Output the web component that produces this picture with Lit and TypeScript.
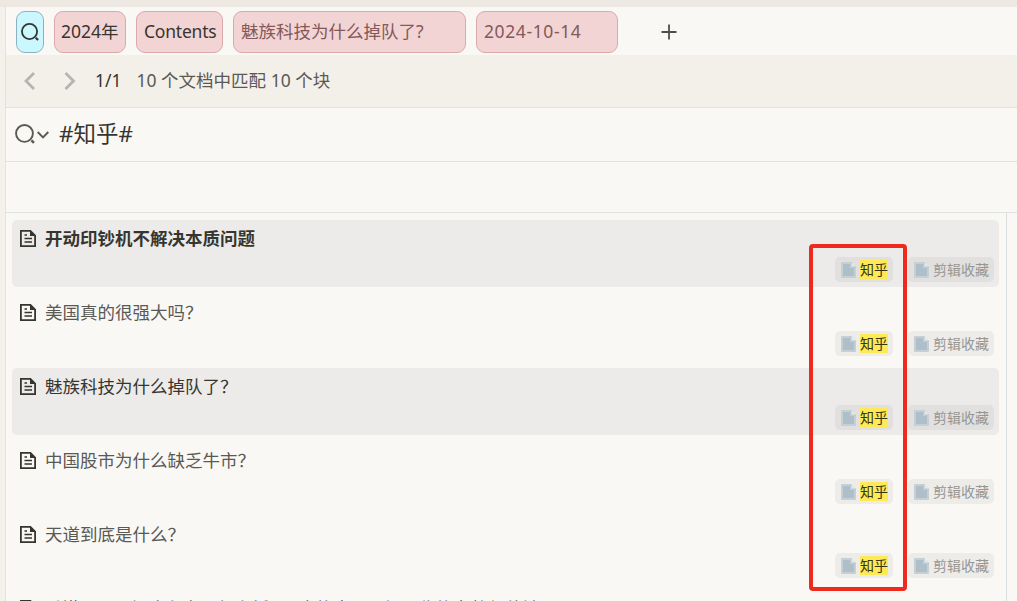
import {LitElement, html, css, svg} from 'lit';
import {customElement, property} from 'lit/decorators.js';
import {classMap} from 'lit/directives/class-map.js';

interface Doc {
  title: string;
  shaded?: boolean;
  bold?: boolean;
}

const docs: Doc[] = [
  {title: '开动印钞机不解决本质问题', shaded: true, bold: true},
  {title: '美国真的很强大吗？'},
  {title: '魅族科技为什么掉队了？', shaded: true},
  {title: '中国股市为什么缺乏牛市？'},
  {title: '天道到底是什么？'},
  {title: '香港 2024 年才六个月怎么折 30 个热点，3 年回收的完整保值法'},
];

const lens = svg`
  <circle cx="9" cy="9" r="8" />
  <path d="M15.6 15.6l2.4 2.4" stroke-width="2.4" />
`;

@customElement('doc-tag')
export class DocTag extends LitElement {
  static styles = css`
    :host {
      display: flex;
      align-items: center;
      box-sizing: border-box;
      height: 25px;
      padding: 0 5px 0 6px;
      border-radius: 5px;
      background: rgba(55, 53, 47, 0.06);
      color: #979693;
      font-size: 14px;
      line-height: 19px;
    }
    svg {
      width: 15px;
      height: 16px;
      margin-right: 4px;
    }
    .marked {
      background: #ffe955;
      color: #37350f;
    }
  `;

  @property() label = '';
  @property({type: Boolean}) marked = false;

  render() {
    return html`
      <svg viewBox="0 0 15 16">
        <path d="M1 0h9l5 5v10q0 1-1 1h-13q-1 0-1-1v-14q0-1 1-1z" fill="#c4d0d5" />
        <path d="M2 2h7v4h4v8h-11z" fill="#afbfca" />
        <path d="M10 0l5 5h-4q-1 0-1-1z" fill="#e4ebed" />
        <path d="M10 0v4q0 1 1 1h4" fill="none" stroke="#b4c4c9" stroke-width="0.8" />
      </svg>
      <span class=${classMap({marked: this.marked})}>${this.label}</span>
    `;
  }
}

@customElement('app-root')
export class AppRoot extends LitElement {
  static styles = css`
    :host {
      display: flex;
      flex-direction: column;
      position: relative;
      box-sizing: border-box;
      width: 1017px;
      height: 601px;
      overflow: hidden;
      padding: 7px 0 0 5px;
      background: linear-gradient(#eee8e2 7px, #f4f0ea 7px);
      color: #37352f;
      font-family: 'Noto Sans', 'Noto Sans CJK SC', sans-serif;
      font-size: 17.5px;
      line-height: 26px;
      white-space: nowrap;
    }
    svg {
      display: block;
      flex: none;
      fill: none;
      stroke: currentColor;
    }
    .panel {
      flex: 1;
      min-height: 0;
      display: flex;
      flex-direction: column;
      border-left: 1px solid #e2e2de;
      background: #f9f8f4;
    }
    .tabs {
      flex: none;
      display: flex;
      gap: 10px;
      height: 48px;
      box-sizing: border-box;
      padding: 4px 0 2px 10px;
      background: #faf8f5;
    }
    .tab {
      display: flex;
      align-items: center;
      box-sizing: border-box;
      height: 42px;
      padding: 0 7px 2px;
      border: 1px solid #dba8ab;
      border-radius: 9px;
      background: #f2d4d4;
    }
    .search {
      width: 28px;
      padding: 0 4px;
      border-color: #8fb0c2;
      background: #cbf8ff;
    }
    .year {
      width: 72px;
      padding-left: 6px;
    }
    .contents {
      width: 87px;
      letter-spacing: -0.22px;
    }
    .article {
      width: 233px;
      color: #84595a;
    }
    .daily {
      width: 142px;
      color: #84595a;
      letter-spacing: 0.6px;
    }
    .add {
      align-self: center;
      margin-left: 33px;
      color: #504e49;
    }
    .pager {
      flex: none;
      display: flex;
      align-items: center;
      height: 52px;
      padding-left: 18px;
      border-bottom: 1px solid #dfe2df;
      background: #f3f0ea;
    }
    .pager svg {
      color: #b7b4af;
    }
    .pager span,
    .title span {
      padding-bottom: 2px;
    }
    .next {
      margin-left: 28px;
    }
    .page {
      margin-left: 19px;
    }
    .summary {
      margin-left: 15px;
      color: #5b5954;
    }
    .query {
      flex: none;
      display: flex;
      align-items: center;
      height: 53px;
      padding-left: 9px;
      border-bottom: 1px solid #dfe2e1;
      font-size: 22.5px;
    }
    .query svg {
      color: #5b5954;
    }
    .query span {
      padding-bottom: 1px;
    }
    .query .lens {
      margin-bottom: 1px;
    }
    .chevron {
      margin: 1px 10px 0 2px;
    }
    .filters {
      flex: none;
      height: 50px;
      border-bottom: 1px solid #dfe2e1;
    }
    .results {
      flex: 1;
      min-height: 0;
      display: flex;
      flex-direction: column;
      gap: 7px;
      width: 1001px;
      box-sizing: border-box;
      padding: 7px 7px 0 6px;
      border-right: 1px solid #d9dfe1;
      overflow: hidden;
    }
    .item {
      flex: none;
      height: 67px;
      border-radius: 5px;
      color: #5b5954;
    }
    .shaded {
      background: #ecebe9;
      color: #37352f;
    }
    .bold {
      font-weight: 700;
    }
    .title {
      display: flex;
      align-items: center;
      gap: 9px;
      height: 37px;
      padding-left: 8px;
    }
    .title svg {
      color: #37352f;
    }
    .tags {
      display: flex;
      justify-content: flex-end;
      gap: 15px;
      padding-right: 5px;
      font-weight: 400;
    }
    .frame {
      position: absolute;
      left: 809px;
      top: 244px;
      width: 98px;
      height: 347px;
      box-sizing: border-box;
      border: 4px solid #ee291e;
      border-radius: 4px;
    }
  `;

  renderItem(doc: Doc) {
    return html`
      <div class=${classMap({item: true, shaded: !!doc.shaded, bold: !!doc.bold})}>
        <div class="title">
          <svg width="16" height="17" viewBox="0 0 16 17">
            <path d="M.9 .9h9.5l4.7 4.7v10.5h-14.2z" stroke-width="1.8" />
            <path d="M10 1h1l4.5 4.5v.5h-5.5z" fill="currentColor" stroke="none" />
            <path d="M4.5 5h2.5M4.5 8.6h7.5M4.5 12h7.5" stroke-width="1.5" />
          </svg>
          <span>${doc.title}</span>
        </div>
        <div class="tags">
          <doc-tag label="知乎" marked></doc-tag>
          <doc-tag label="剪辑收藏"></doc-tag>
        </div>
      </div>
    `;
  }

  render() {
    return html`
      <div class="panel">
        <div class="tabs">
          <div class="tab search">
            <svg width="18" height="18" viewBox="0 0 19 19" stroke-width="1.9">${lens}</svg>
          </div>
          <div class="tab year">2024年</div>
          <div class="tab contents">Contents</div>
          <div class="tab article">魅族科技为什么掉队了?</div>
          <div class="tab daily">2024-10-14</div>
          <svg class="add" width="16" height="16" viewBox="0 0 16 16" stroke-width="1.8">
            <path d="M8 .5v15M.5 8h15" />
          </svg>
        </div>
        <div class="pager">
          <svg width="12" height="18" viewBox="0 0 12 18" stroke-width="2.8">
            <path d="M10 1L2 9l8 8" />
          </svg>
          <svg class="next" width="12" height="18" viewBox="0 0 12 18" stroke-width="2.8">
            <path d="M1.5 1l8 8-8 8" />
          </svg>
          <span class="page">1/1</span>
          <span class="summary">10 个文档中匹配 10 个块</span>
        </div>
        <div class="query">
          <svg class="lens" width="20" height="20" viewBox="0 0 19 19" stroke-width="1.8">${lens}</svg>
          <svg class="chevron" width="12" height="8" viewBox="0 0 12 8" stroke-width="1.9">
            <path d="M.7 1L6 6.3 11.3 1" />
          </svg>
          <span>#知乎#</span>
        </div>
        <div class="filters"></div>
        <div class="results">${docs.map((doc) => this.renderItem(doc))}</div>
      </div>
      <div class="frame"></div>
    `;
  }
}
